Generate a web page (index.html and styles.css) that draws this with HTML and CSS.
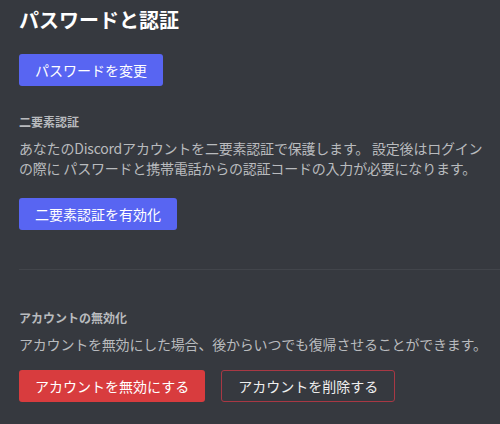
FILE: index.html
```html
<!DOCTYPE html>
<html lang="ja">
<head>
    <meta charset="UTF-8">
    <title>パスワードと認証</title>
    <link rel="stylesheet" href="styles.css">
</head>
<body>

    <div class="settings">
        <h1 class="title">パスワードと認証</h1>
        <button class="btn btn-brand">パスワードを変更</button>

        <div class="section">
            <h2 class="section-title">二要素認証</h2>
            <p class="section-text section-text-narrow">あなたのDiscordアカウントを二要素認証で保護します。 設定後はログインの際に パスワードと携帯電話からの認証コードの入力が必要になります。</p>
            <button class="btn btn-brand">二要素認証を有効化</button>
        </div>

        <div class="divider"></div>

        <div class="section section-danger">
            <h2 class="section-title">アカウントの無効化</h2>
            <p class="section-text">アカウントを無効にした場合、後からいつでも復帰させることができます。</p>
            <div class="actions">
                <button class="btn btn-danger">アカウントを無効にする</button>
                <button class="btn btn-outline">アカウントを削除する</button>
            </div>
        </div>
    </div>

</body>
</html>
```

FILE: styles.css
```css
body {
    margin: 0;
    padding: 0;
    background-color: #36393f;
    font-family: "Noto Sans CJK JP", "Noto Sans", sans-serif;
    color: #b9bbbe;
}

.settings {
    padding: 8px 0 0 19px;
}

.title {
    margin: 0 0 22px;
    font-size: 20px;
    line-height: 24px;
    font-weight: 700;
    color: #ffffff;
}

.btn {
    display: block;
    height: 32px;
    padding: 0 16px;
    border: none;
    border-radius: 3px;
    font-family: inherit;
    font-size: 14px;
    line-height: 32px;
    color: #ffffff;
    cursor: pointer;
}

.btn-brand {
    background: #5865f2;
}

.btn-danger {
    background: #d83c3e;
}

.btn-outline {
    background: transparent;
    border: 1px solid #a83844;
    line-height: 30px;
    color: #eeeeee;
}

.section {
    margin-top: 28px;
}

.section-title {
    margin: 0 0 8px;
    font-size: 12px;
    line-height: 16px;
    font-weight: 700;
    color: #b9bbbe;
}

.section-text {
    margin: 0 0 20px;
    font-size: 14px;
    line-height: 20px;
    letter-spacing: -0.2px;
}

.section-text-narrow {
    max-width: 468px;
}

.divider {
    height: 1px;
    margin-top: 39px;
    background: #42454b;
}

.section-danger {
    margin-top: 40px;
}

.section-danger .section-text {
    margin-bottom: 16px;
}

.actions {
    display: flex;
    gap: 16px;
}
```
